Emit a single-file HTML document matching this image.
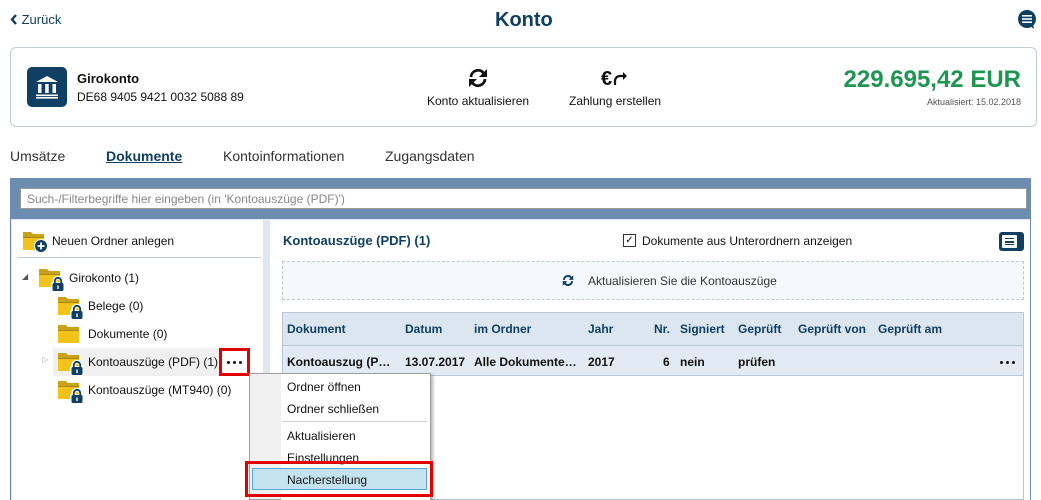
<!DOCTYPE html>
<html><head><meta charset="utf-8"><style>
*{margin:0;padding:0;box-sizing:border-box}
body{width:1041px;height:500px;overflow:hidden;background:#fff;font-family:"Liberation Sans",sans-serif;font-size:12px;color:#111;position:relative}
.a{position:absolute;white-space:nowrap}
.nav{color:#0f3f63}
.dots{display:flex;gap:3px;align-items:center;justify-content:center}
.dots i{width:3px;height:3px;background:#111;border-radius:50%}
</style></head><body>
<svg width="0" height="0" style="position:absolute"><defs>
<symbol id="fl" viewBox="0 0 24 24"><path d="M1 3h8l2 2h11v16H1z" fill="#c9a21a"/><path d="M1 8h21v13H1z" fill="#f2c419"/><rect x="1" y="8" width="21" height="1" fill="#a88614"/></symbol>
<symbol id="lk" viewBox="0 0 14 16"><path d="M3.5 7V5a3.5 3.5 0 0 1 7 0v2" stroke="#fff" stroke-width="4" fill="none"/><rect x="0" y="6" width="14" height="10" rx="2" fill="#fff"/><path d="M3.8 7V5a3.2 3.2 0 0 1 6.4 0v2" stroke="#0f3f63" stroke-width="1.8" fill="none"/><rect x="1.5" y="7" width="11" height="8" rx="1.5" fill="#0f3f63"/><rect x="6.3" y="9.5" width="1.4" height="3.5" fill="#fff"/></symbol>
</defs></svg>

<div class="a nav" style="left:10px;top:12px;font-size:13px"><svg width="8" height="11" style="vertical-align:-1px"><path d="M6 1L2 5.5 6 10" stroke="#0f3f63" stroke-width="2.4" fill="none"/></svg> Zurück</div>
<div class="a nav" style="left:495px;top:9px;font-size:20px;font-weight:bold">Konto</div>
<svg class="a" style="left:1017px;top:10px" width="20" height="20" viewBox="0 0 20 20"><circle cx="10" cy="9" r="9" fill="#0f3f63"/><path d="M13 16l4 3-1-5z" fill="#0f3f63"/><rect x="5" y="5" width="10" height="1.6" fill="#fff"/><rect x="5" y="8.2" width="10" height="1.6" fill="#fff"/><rect x="5" y="11.4" width="10" height="1.6" fill="#fff"/></svg>

<div class="a" style="left:10px;top:47px;width:1027px;height:80px;border:1px solid #c5ced8;border-radius:6px"></div>
<div class="a" style="left:27px;top:67px;width:40px;height:40px;background:#0f3f63;border-radius:5px"></div>
<svg class="a" style="left:31px;top:71px" width="32" height="32" viewBox="0 0 32 32"><path d="M16 5L5 11h22z" fill="#fff"/><rect x="7" y="13" width="3.5" height="9" fill="#fff"/><rect x="14.2" y="13" width="3.5" height="9" fill="#fff"/><rect x="21.5" y="13" width="3.5" height="9" fill="#fff"/><rect x="5" y="23.5" width="22" height="1.6" fill="#fff"/><rect x="5" y="26" width="22" height="1.6" fill="#fff"/></svg>
<div class="a" style="left:77px;top:71px;font-size:13px;font-weight:bold">Girokonto</div>
<div class="a" style="left:77px;top:90px">DE68 9405 9421 0032 5088 89</div>
<svg class="a" style="left:466px;top:68px" width="24" height="20" viewBox="0 0 24 20"><path d="M5 9a7 7 0 0 1 12.5-4" stroke="#111" stroke-width="2.8" fill="none"/><path d="M21 1v8h-8z" fill="#111"/><path d="M19 11a7 7 0 0 1-12.5 4" stroke="#111" stroke-width="2.8" fill="none"/><path d="M3 19v-8h8z" fill="#111"/></svg>
<div class="a" style="left:427px;top:94px">Konto aktualisieren</div>
<svg class="a" style="left:601px;top:67px" width="28" height="22" viewBox="0 0 28 22"><text x="0" y="18" font-family="Liberation Sans" font-weight="bold" font-size="20" fill="#111">€</text><path d="M14 18v-4a5 5 0 0 1 5-5h4" stroke="#111" stroke-width="2.2" fill="none"/><path d="M22 5l4 4-4 4z" fill="#111"/></svg>
<div class="a" style="left:569px;top:94px">Zahlung erstellen</div>
<div class="a" style="right:20px;top:66px;font-size:24px;font-weight:bold;color:#1e9651">229.695,42 EUR</div>
<div class="a" style="right:20px;top:97px;font-size:9px;color:#555">Aktualisiert: 15.02.2018</div>

<div class="a" style="left:10px;top:148px;font-size:14px;color:#333">Umsätze</div>
<div class="a nav" style="left:106px;top:148px;font-size:14px;font-weight:bold;text-decoration:underline">Dokumente</div>
<div class="a" style="left:223px;top:148px;font-size:14px;color:#333">Kontoinformationen</div>
<div class="a" style="left:385px;top:148px;font-size:14px;color:#333">Zugangsdaten</div>

<div class="a" style="left:10px;top:178px;width:1021px;height:322px;background:#6d8db0"></div>
<div class="a" style="left:20px;top:188px;width:1007px;height:21px;background:#fff;border:1px solid #999;color:#888;padding:3px 6px">Such-/Filterbegriffe hier eingeben (in 'Kontoauszüge (PDF)')</div>
<div class="a" style="left:11px;top:219px;width:1019px;height:281px;background:#dfe7f0"></div>
<div class="a" style="left:12px;top:220px;width:251px;height:280px;background:#fff"></div>
<div class="a" style="left:270px;top:220px;width:760px;height:280px;background:#fff"></div>

<svg class="a" style="left:22px;top:229px" width="26" height="24"><use href="#fl" width="24" height="24"/><circle cx="19" cy="17" r="7" fill="#fff"/><circle cx="19" cy="17" r="6" fill="#0f3f63"/><path d="M19 13.5v7M15.5 17h7" stroke="#fff" stroke-width="1.8"/></svg>
<div class="a" style="left:52px;top:234px">Neuen Ordner anlegen</div>
<div class="a" style="left:17px;top:257px;width:244px;height:1px;background:#c3ccd6"></div>

<div class="a" style="left:22px;top:272px;font-size:8px;color:#555">◢</div>
<svg class="a" style="left:38px;top:266px" width="30" height="26"><use href="#fl" width="24" height="24"/><use href="#lk" x="13" y="10" width="14" height="16"/></svg>
<div class="a" style="left:69px;top:271px">Girokonto (1)</div>
<svg class="a" style="left:57px;top:294px" width="30" height="26"><use href="#fl" width="24" height="24"/><use href="#lk" x="13" y="10" width="14" height="16"/></svg>
<div class="a" style="left:88px;top:299px">Belege (0)</div>
<svg class="a" style="left:57px;top:322px" width="30" height="26"><use href="#fl" width="24" height="24"/></svg>
<div class="a" style="left:88px;top:327px">Dokumente (0)</div>
<div class="a" style="left:53px;top:348px;width:195px;height:28px;background:#f0f0f0"></div>
<div class="a" style="left:42px;top:355px;font-size:8px;color:#aaa">▷</div>
<svg class="a" style="left:57px;top:350px" width="30" height="26"><use href="#fl" width="24" height="24"/><use href="#lk" x="13" y="10" width="14" height="16"/></svg>
<div class="a" style="left:88px;top:355px">Kontoauszüge (PDF) (1)</div>
<div class="a dots" style="left:219px;top:348px;width:31px;height:28px;border:3px solid #e00000;background:#fff"><i></i><i></i><i></i></div>
<svg class="a" style="left:57px;top:378px" width="30" height="26"><use href="#fl" width="24" height="24"/><use href="#lk" x="13" y="10" width="14" height="16"/></svg>
<div class="a" style="left:88px;top:383px">Kontoauszüge (MT940) (0)</div>

<div class="a nav" style="left:283px;top:233px;font-size:13px;font-weight:bold">Kontoauszüge (PDF) (1)</div>
<div class="a" style="left:623px;top:234px;width:13px;height:13px;border:1px solid #333;font-size:10px;line-height:11px;text-align:center">✓</div>
<div class="a" style="left:642px;top:234px">Dokumente aus Unterordnern anzeigen</div>
<div class="a" style="left:999px;top:232px;width:25px;height:19px;background:#0f3f63;border-radius:3px"></div>
<div class="a" style="left:1002px;top:235px;width:15px;height:13px;background:#fff;border-radius:1px"></div>
<div class="a" style="left:1005px;top:238px;width:9px;height:7px;border-top:1.5px solid #0f3f63;border-bottom:1.5px solid #0f3f63"></div>
<div class="a" style="left:1005px;top:241px;width:9px;height:1.5px;background:#0f3f63"></div>
<div class="a" style="left:282px;top:261px;width:742px;height:39px;background:#f5f9fc;border:1px dashed #c0c8d0"></div>
<svg class="a" style="left:561px;top:274px" width="14" height="13" viewBox="0 0 24 20"><path d="M5 9a7 7 0 0 1 12.5-4" stroke="#0f3f63" stroke-width="3.4" fill="none"/><path d="M21 1v8h-8z" fill="#0f3f63"/><path d="M19 11a7 7 0 0 1-12.5 4" stroke="#0f3f63" stroke-width="3.4" fill="none"/><path d="M3 19v-8h8z" fill="#0f3f63"/></svg>
<div class="a" style="left:588px;top:274px;color:#333">Aktualisieren Sie die Kontoauszüge</div>

<div class="a" style="left:282px;top:312px;width:742px;height:188px;border:1px solid #b8c6d6;background:#fff"></div>
<div class="a" style="left:283px;top:313px;width:740px;height:33px;background:#dce6f1;border-bottom:1px solid #b8c6d6"></div>
<div class="a" style="left:283px;top:346px;width:740px;height:30px;background:#e2eaf4;border-bottom:1px solid #b8c6d6"></div>
<div class="a nav" style="top:322px;left:0;width:1041px;font-weight:bold;height:14px">
<span class="a" style="left:287px">Dokument</span><span class="a" style="left:405px">Datum</span><span class="a" style="left:474px">im Ordner</span><span class="a" style="left:588px">Jahr</span><span class="a" style="left:654px">Nr.</span><span class="a" style="left:680px">Signiert</span><span class="a" style="left:738px">Geprüft</span><span class="a" style="left:798px">Geprüft von</span><span class="a" style="left:878px">Geprüft am</span></div>
<div class="a" style="top:355px;left:0;width:1041px;font-weight:bold;height:14px">
<span class="a" style="left:287px">Kontoauszug (P…</span><span class="a" style="left:405px">13.07.2017</span><span class="a" style="left:474px">Alle Dokumente…</span><span class="a" style="left:588px">2017</span><span class="a" style="left:663px">6</span><span class="a" style="left:680px">nein</span><span class="a" style="left:738px">prüfen</span></div>
<div class="a dots" style="left:998px;top:356px;width:18px;height:12px"><i></i><i></i><i></i></div>

<div class="a" style="left:249px;top:373px;width:182px;height:127px;background:#f0f0f0;border:1px solid #a0a0a0;box-shadow:2px 2px 3px rgba(0,0,0,.3)"></div>
<div class="a" style="left:281px;top:374px;width:149px;height:126px;background:#fff"></div>
<div class="a" style="left:287px;top:380px">Ordner öffnen</div>
<div class="a" style="left:287px;top:402px">Ordner schließen</div>
<div class="a" style="left:282px;top:421px;width:145px;height:1px;background:#d0d0d0"></div>
<div class="a" style="left:287px;top:429px">Aktualisieren</div>
<div class="a" style="left:287px;top:451px">Einstellungen</div>
<div class="a" style="left:252px;top:468px;width:175px;height:22px;background:#c4e2f0;border:1px solid #5aa7d6"></div>
<div class="a" style="left:287px;top:473px">Nacherstellung</div>
<div class="a" style="left:245px;top:461px;width:188px;height:36px;border:3px solid #e00000"></div>
</body></html>
